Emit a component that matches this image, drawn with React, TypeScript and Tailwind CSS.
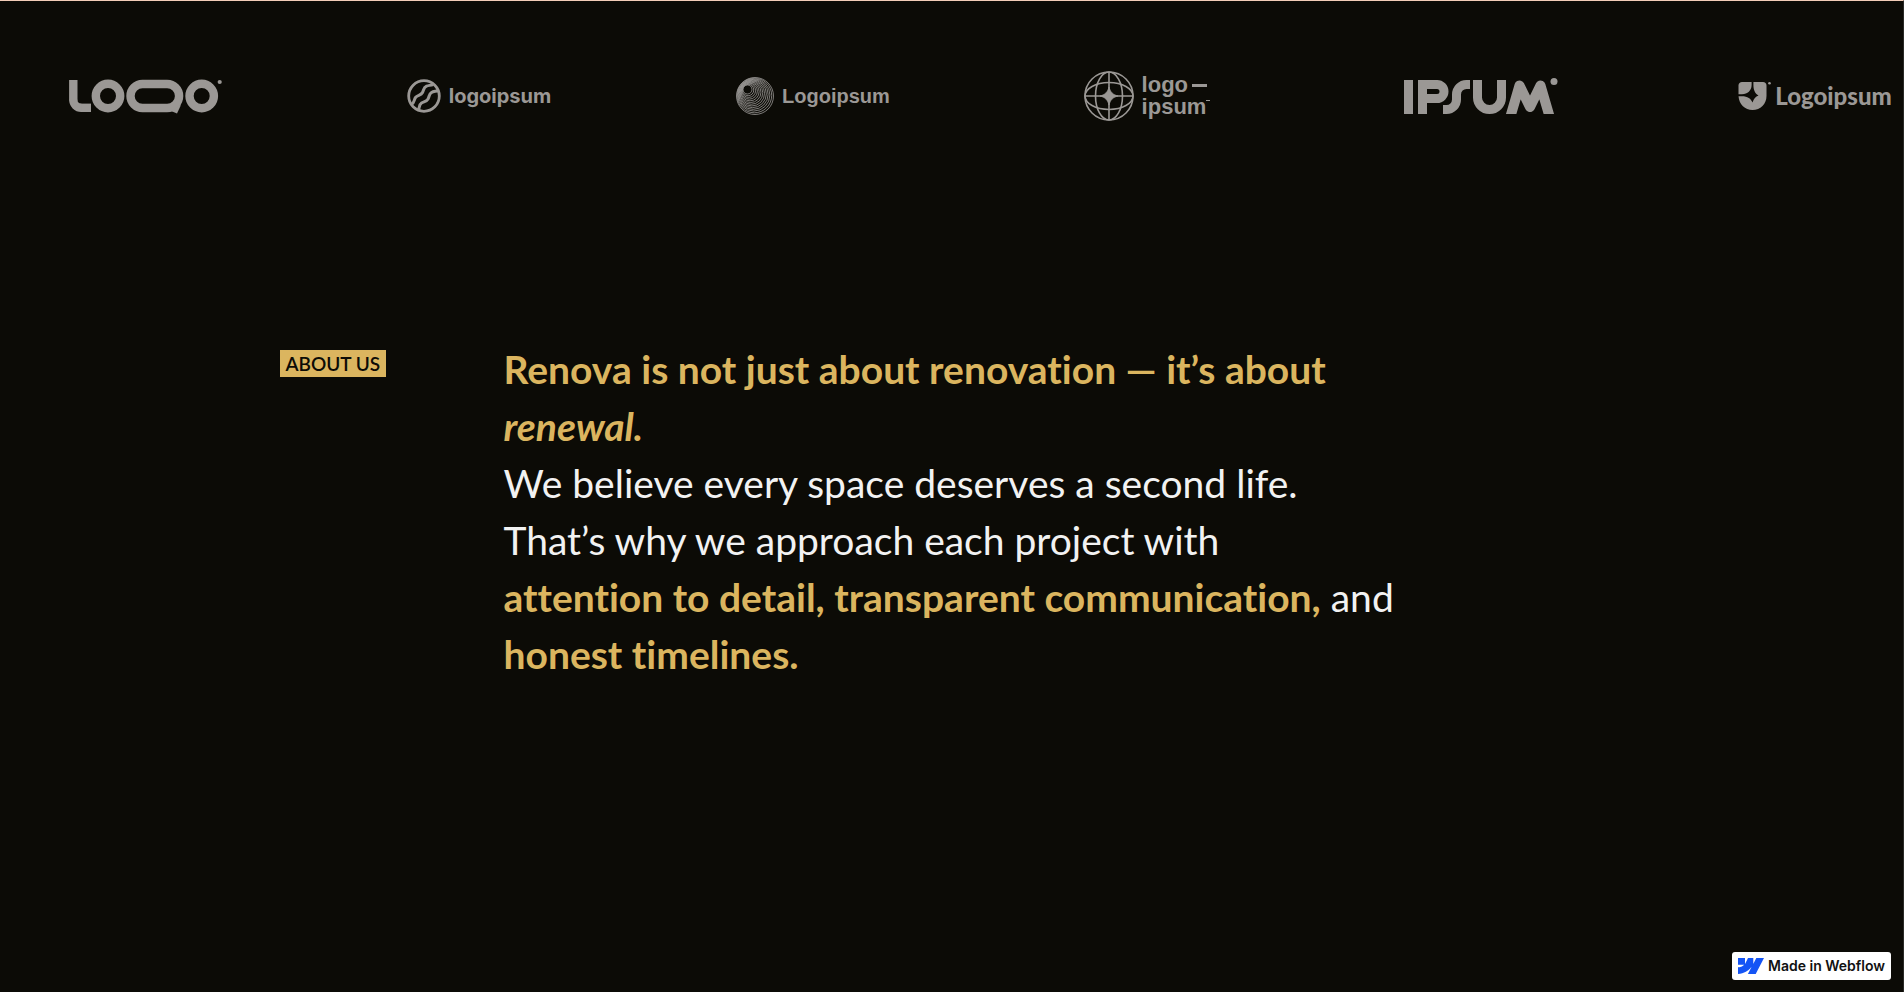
import React from "react";

const INK = "#9b9895";

type ArcProps = {
  cx: number;
  cy: number;
  r: number;
  from: number;
  quarters: number;
};

/* Part of a ring: starts at `from` degrees (clockwise from 3 o'clock). */
function Arc({ cx, cy, r, from, quarters }: ArcProps) {
  return (
    <circle
      cx={cx}
      cy={cy}
      r={r}
      pathLength={4}
      strokeDasharray={`${quarters} ${4 - quarters}`}
      transform={`rotate(${from} ${cx} ${cy})`}
    />
  );
}

function LoqoLogo() {
  return (
    <svg width="154" height="36" viewBox="68 77 154 36" role="img" aria-label="Loqo">
      <g fill="none" stroke={INK} strokeWidth="8.4">
        <line x1="73.3" y1="79" x2="73.3" y2="99.4" />
        <line x1="80.7" y1="106.8" x2="91" y2="106.8" />
        <Arc cx={81.3} cy={98.8} r={8} from={90} quarters={1} />
        <circle cx="108" cy="95" r="12.2" />
        <rect x="130.5" y="83" width="48.6" height="24" rx="12" />
        <circle cx="201.7" cy="95" r="12.2" />
      </g>
      <polygon points="171,110 181,104 177,112.500" fill={INK} />
      <circle cx="219.7" cy="81" r="2.1" fill={INK} />
    </svg>
  );
}

function WaveLogo() {
  return (
    <div className="flex items-center gap-2">
      <svg width="34" height="34" viewBox="0 0 34 34" fill="none" stroke={INK} aria-hidden="true">
        <circle cx="17" cy="17" r="15.3" strokeWidth="2.8" />
        <g strokeWidth="3">
          <path d="M4.500 25.500C7.500 24 7 20.500 8.500 18.500C10.500 16 14 16.500 15.500 13.500C17 10.500 16.500 8.500 19.500 7.200C21.500 6.300 23.500 6.500 26 5.500" />
          <path d="M11.500 31C12.500 28.500 12 25.500 14.500 24C17 22.500 19.500 22.800 21 20C22.500 17 22 15 24.500 13.500C26.500 12.300 28.500 12.500 31.500 11.500" />
        </g>
      </svg>
      <span className="font-['Inter',sans-serif] text-[20px] leading-7 font-bold">logoipsum</span>
    </div>
  );
}

const rings = Array.from({ length: 13 }, (_, i) => {
  const t = i / 12;
  return { cx: 11.5 + 7.5 * t, cy: 12.5 + 6.5 * t, r: 4.5 + 14 * t };
});

function RingsLogo() {
  return (
    <div className="flex items-center gap-2">
      <svg width="38" height="38" viewBox="0 0 38 38" fill="none" stroke={INK} aria-hidden="true">
        {rings.map((ring) => (
          <circle key={ring.r} cx={ring.cx} cy={ring.cy} r={ring.r} strokeWidth="0.8" />
        ))}
      </svg>
      <span className="font-['Liberation_Sans',sans-serif] text-[20px] leading-7 font-bold">
        Logoipsum
      </span>
    </div>
  );
}

function GlobeLogo() {
  return (
    <div className="flex items-center gap-2">
      <svg width="50" height="50" viewBox="0 0 50 50" fill="none" stroke={INK} aria-hidden="true">
        <g strokeWidth="1.6">
          <circle cx="25" cy="25" r="24" />
          <ellipse cx="25" cy="25" rx="13.500" ry="24" />
          <ellipse cx="25" cy="25" rx="24" ry="13.500" />
          <line x1="25" y1="1" x2="25" y2="49" />
          <line x1="1" y1="25" x2="49" y2="25" />
        </g>
        <path
          d="M25 16C26.200 21 29 23.800 34 25C29 26.200 26.200 29 25 34C23.800 29 21 26.200 16 25C21 23.800 23.800 21 25 16Z"
          fill={INK}
          strokeWidth="0.8"
        />
      </svg>
      <div className="font-['Liberation_Sans',sans-serif] text-[22px] leading-[22px] font-bold">
        <div className="flex items-center gap-1">
          <span>logo</span>
          <span className="h-[3px] w-[15px] bg-[#9b9895]" />
        </div>
        <div className="flex">
          <span>ipsum</span>
          <span className="mt-1 h-px w-1 bg-[#9b9895]" />
        </div>
      </div>
    </div>
  );
}

function IpsumLogo() {
  return (
    <svg width="154" height="36" viewBox="0 0 154 36" role="img" aria-label="Ipsum">
      <svg x="0" y="2" width="151" height="34" viewBox="0 0 151 34">
        <g fill="none" stroke={INK} strokeWidth="9">
          <line x1="4.500" y1="0" x2="4.500" y2="34" />
          <line x1="18.500" y1="0" x2="18.500" y2="34" />
          <line x1="18" y1="4.500" x2="33.600" y2="4.500" />
          <line x1="18" y1="18.500" x2="33.600" y2="18.500" />
          <Arc cx={33} cy={11.5} r={7} from={-90} quarters={2} />
          <line x1="66" y1="4.500" x2="61.900" y2="4.500" />
          <Arc cx={62.5} cy={14.5} r={10} from={180} quarters={1} />
          <line x1="52.500" y1="13.900" x2="52.500" y2="20.100" />
          <Arc cx={42.5} cy={19.5} r={10} from={0} quarters={1} />
          <line x1="43.100" y1="29.500" x2="39" y2="29.500" />
          <line x1="73.500" y1="0" x2="73.500" y2="18.100" />
          <line x1="97.500" y1="0" x2="97.500" y2="18.100" />
          <Arc cx={85.5} cy={17.5} r={12} from={0} quarters={2} />
          <polyline
            points="106,38 115.500,5.500 126,27 136.500,5.500 146,38"
            strokeWidth="10"
            strokeLinejoin="round"
          />
        </g>
      </svg>
      <circle cx="150" cy="3.600" r="3.500" fill={INK} />
    </svg>
  );
}

function ShieldLogo() {
  return (
    <div className="flex items-center gap-1">
      <svg width="33" height="30" viewBox="0 0 33 30" fill={INK} aria-hidden="true">
        <path d="M4 1H13.600V4C13.600 9.500 9.500 13.300 4 13.300H0.500V4.500C0.500 2.500 2 1 4 1Z" />
        <path d="M15.400 1H25C27 1 28.500 2.500 28.500 4.500V15C28.500 23 22.500 29 14.500 29C7 29 1.200 23.500 0.500 15.200H4C9.500 15.200 13 17.500 14.500 21.500C15.800 17.800 17.500 15.600 20.500 14.400C17.500 13 15.400 9.500 15.400 4Z" />
        <circle cx="31.500" cy="2.300" r="1.300" />
      </svg>
      <span className="font-['Lato',sans-serif] text-[24px] leading-7 font-black">Logoipsum</span>
    </div>
  );
}

const logos = [LoqoLogo, WaveLogo, RingsLogo, GlobeLogo, IpsumLogo, ShieldLogo];

function WebflowBadge() {
  return (
    <a
      href="#webflow"
      className="fixed right-[13px] bottom-3 flex h-7 items-center gap-1 rounded-[3px] bg-white px-1.5 font-['Inter',sans-serif] text-[14px] leading-5 font-semibold text-[#111]"
    >
      <svg width="26" height="16" viewBox="0 0 26 16" fill="#1454f5" aria-hidden="true">
        <path d="M26 0L17.700 16H9.900L13.400 9.300H13.200C10.400 13 6.200 15.400 0 16V9.400C0 9.400 3.900 9.200 6.200 6.800H0V0H7V5.700H7.200L10 0H15.300V5.700H15.400L18.300 0Z" />
      </svg>
      Made in Webflow
    </a>
  );
}

export default function App() {
  return (
    <div className="min-h-screen overflow-hidden border-t border-r border-t-[#f3cdb8] border-r-[#2a2a27] bg-[#0c0b06] font-['Lato','Open_Sans',sans-serif] text-[#f2f2f2]">
      <section className="-ml-[22px] flex pt-[70px] text-[#9b9895]" aria-label="Partners">
        {logos.map((Logo, index) => (
          <div key={index} className="flex h-[50px] w-[334px] shrink-0 items-center justify-center">
            <Logo />
          </div>
        ))}
      </section>

      <section className="mx-auto flex max-w-[1344px] items-start pt-[220px] pb-[300px]">
        <div className="w-56 shrink-0 pt-[9px]">
          <h2 className="inline-block bg-[#dbb55f] px-1.5 text-[19px] leading-[27px] font-semibold text-[#0c0b06]">
            ABOUT US
          </h2>
        </div>
        <div className="max-w-[920px] text-[39px] leading-[57px] [font-variant-ligatures:none]">
          <p className="font-bold text-[#dbb55f]">
            Renova is not just about renovation — it’s about
            <br />
            <em>renewal.</em>
          </p>
          <p>We believe every space deserves a second life.</p>
          <p>That’s why we approach each project with</p>
          <p>
            <strong className="font-bold text-[#dbb55f]">
              attention to detail, transparent communication,
            </strong>{" "}
            and
            <br />
            <strong className="font-bold text-[#dbb55f]">honest timelines.</strong>
          </p>
        </div>
      </section>

      <WebflowBadge />
    </div>
  );
}
